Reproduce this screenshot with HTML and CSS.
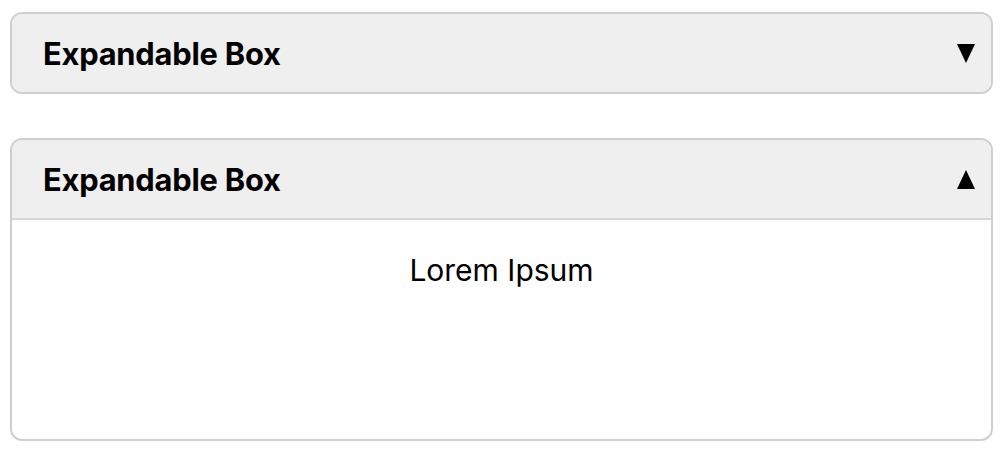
FILE: index.html
```html
<!DOCTYPE HTML><html>
<head>
	<meta name="viewport" charset="UTF-8" content="width=device-width, initial-scale=1">
	<title>Expandable Box</title>
	<link rel="stylesheet" href="styles.css">
</head>
<body>
	<div class="boxes">
		<div class="box">
			<div class="box-head">
				<span class="box-title">Expandable Box</span>
				<svg class="arrow" width="18" height="19" viewBox="0 0 18 19"><polygon points="0,0 18,0 9,19" fill="#000"/></svg>
			</div>
		</div>
		<div class="box open">
			<div class="box-head">
				<span class="box-title">Expandable Box</span>
				<svg class="arrow" width="18" height="19" viewBox="0 0 18 19"><polygon points="0,19 18,19 9,0" fill="#000"/></svg>
			</div>
			<div class="box-body">Lorem Ipsum</div>
		</div>
	</div>
</body>
</html>
```

FILE: styles.css
```css
body {
	margin: 0;
	background-color: #fff;
	font-family: Inter, "Noto Sans", sans-serif;
	color: #000;
}
.boxes {
	display: flex;
	flex-direction: column;
	gap: 44px;
	padding: 12px 7px 0 10px;
}
.box {
	border: 2px solid #cfcfcf;
	border-radius: 12px;
	overflow: hidden;
	background-color: #fff;
}
.box-head {
	display: flex;
	align-items: center;
	justify-content: space-between;
	height: 78px;
	padding: 0 16px 0 31px;
	background-color: #efefef;
}
.box-title {
	font-size: 30.8px;
	font-weight: bold;
	letter-spacing: -0.2px;
}
.open .box-head {
	height: 78px;
	border-bottom: 2px solid #d6d6d6;
}
.box-body {
	height: 185px;
	padding-top: 34px;
	font-size: 30px;
	line-height: 32px;
	text-align: center;
}
```
